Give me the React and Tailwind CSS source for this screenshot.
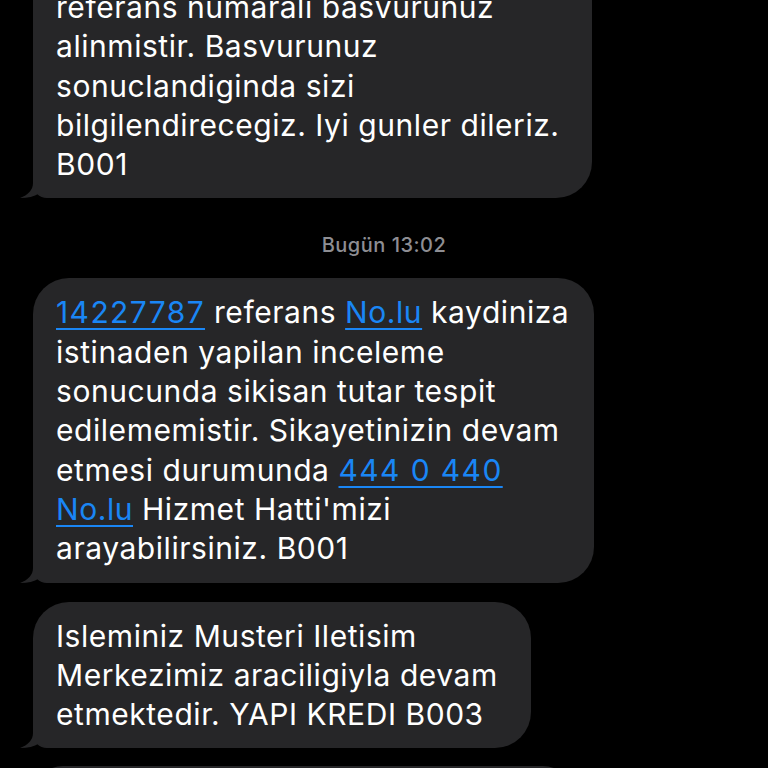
import React from 'react';

const Link = ({ children, num }) => (
  <span
    className={`text-[#1a86f5] underline decoration-2 underline-offset-[5px] ${
      num ? 'tracking-[1.4px]' : ''
    }`}
  >
    {children}
  </span>
);

const messages = [
  {
    width: 'w-[559px]',
    top: true,
    lines: [
      'referans numarali basvurunuz',
      'alinmistir. Basvurunuz',
      'sonuclandiginda sizi',
      'bilgilendirecegiz. Iyi gunler dileriz.',
      'B001',
    ],
  },
  { stamp: 'Bugün 13:02' },
  {
    width: 'w-[561px]',
    lines: [
      <><Link num>14227787</Link> referans <Link>No.lu</Link> kaydiniza</>,
      'istinaden yapilan inceleme',
      'sonucunda sikisan tutar tespit',
      'edilememistir. Sikayetinizin devam',
      <>etmesi durumunda <Link num>444 0 440</Link></>,
      <><Link>No.lu</Link> Hizmet Hatti'mizi</>,
      'arayabilirsiniz. B001',
    ],
  },
  {
    width: 'w-[498px]',
    lines: [
      'Isleminiz Musteri Iletisim',
      'Merkezimiz araciligiyla devam',
      'etmektedir. YAPI KREDI B003',
    ],
  },
];

function Tail() {
  return (
    <svg className="absolute left-[-13px] bottom-0" width="30" height="26" viewBox="0 0 30 26">
      <path d="M13 0 V11 C13 18 8 23 0 26 C8 26 14 24.5 19 21.5 C22 24 26 26 30 26 V0 Z" fill="#262628" />
    </svg>
  );
}

function Bubble({ msg }) {
  return (
    <div
      className={`relative ${msg.width} bg-[#262628] rounded-[36px] rounded-bl-[14px] pl-[23px] pb-[14px] ${
        msg.top ? 'pt-[60px] -mt-[72px]' : 'pt-[15px]'
      }`}
    >
      {msg.lines.map((line, i) => (
        <div
          key={i}
          className="whitespace-nowrap text-white text-[30px] leading-[39.3px] tracking-[0.55px]"
        >
          {line}
        </div>
      ))}
      <Tail />
    </div>
  );
}

export default function App() {
  return (
    <div
      className="w-[768px] h-[768px] overflow-hidden bg-black"
      style={{ fontFamily: 'Inter, "Noto Sans", sans-serif' }}
    >
      <div className="flex flex-col pl-[33px]">
        {messages.map((msg, i) =>
          msg.stamp ? (
            <div
              key={i}
              className="self-center -ml-[33px] mt-[35px] mb-[21px] text-[20px] leading-[24px] font-medium tracking-[0.5px] text-[#8e8e93]"
            >
              {msg.stamp}
            </div>
          ) : (
            <div key={i} className={i > 2 ? 'mt-[19px]' : ''}>
              <Bubble msg={msg} />
            </div>
          )
        )}
        {/* next message, just peeking in at the bottom edge */}
        <div className="mt-[18px] w-[540px] h-[60px] bg-[#262628] rounded-[36px]" />
      </div>
    </div>
  );
}
